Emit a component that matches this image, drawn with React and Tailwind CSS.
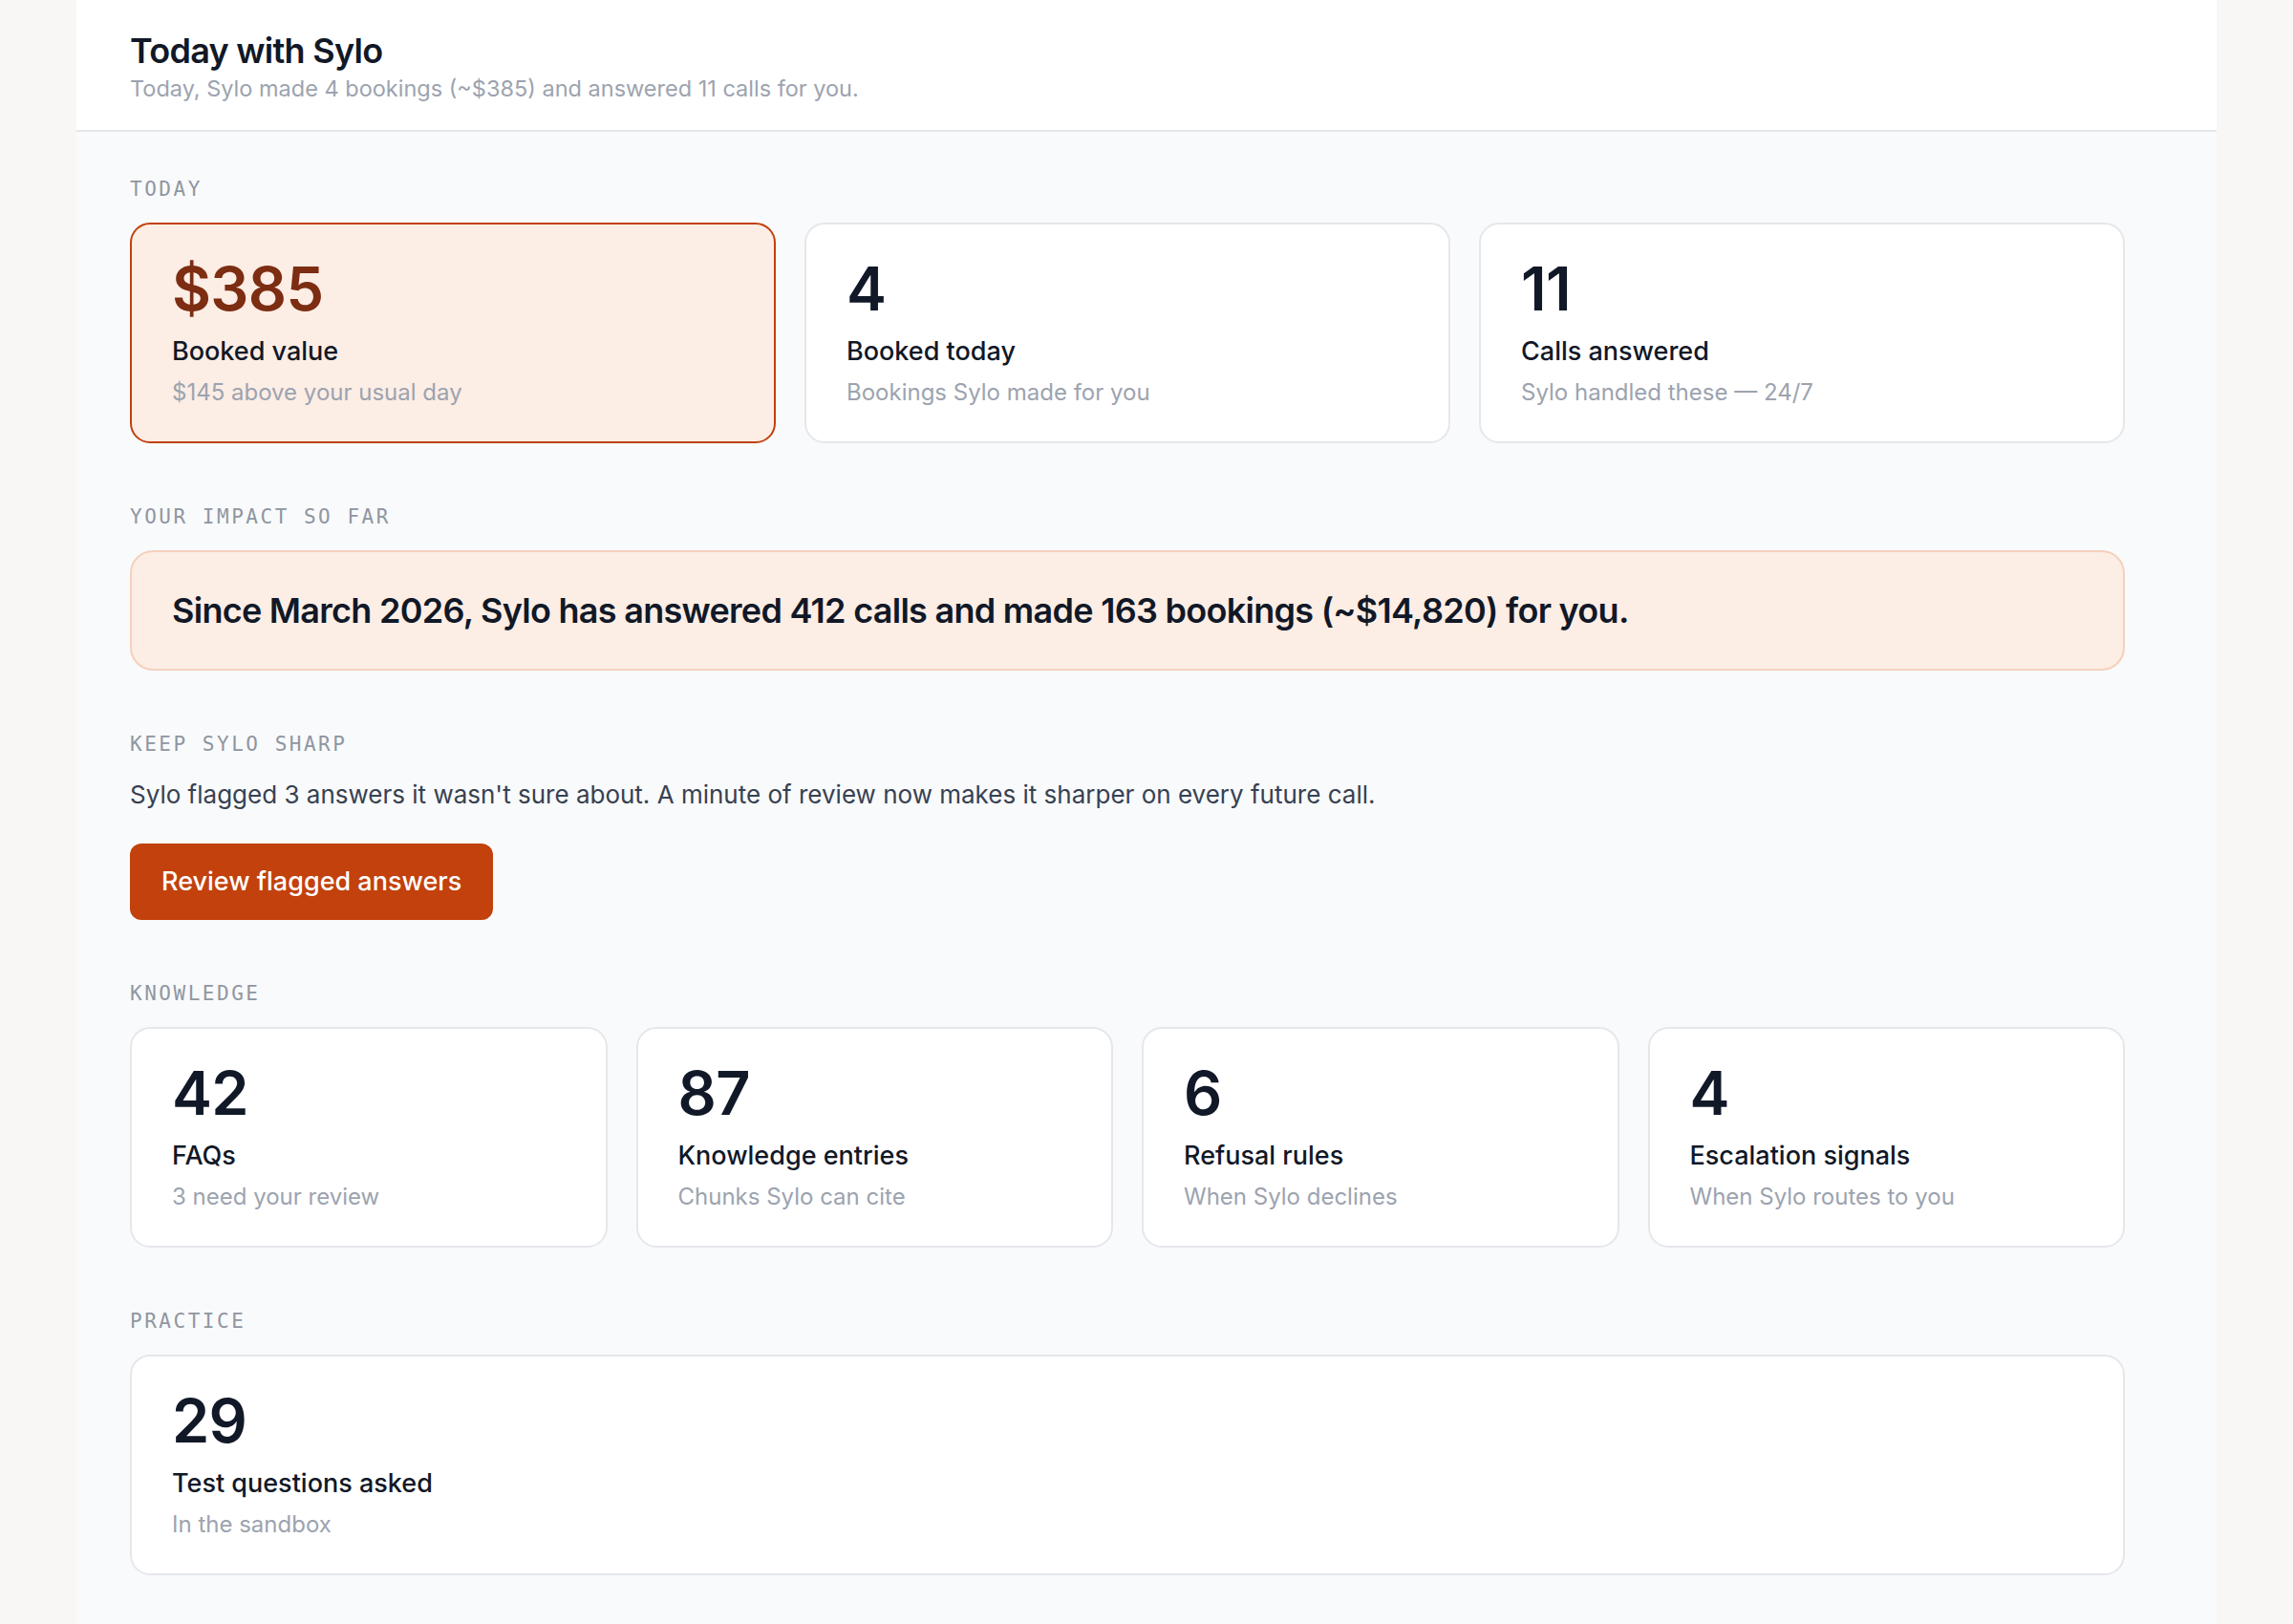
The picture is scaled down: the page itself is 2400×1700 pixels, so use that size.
import React from "react";

const today = [
  { value: "$385", title: "Booked value", sub: "$145 above your usual day", highlight: true },
  { value: "4", title: "Booked today", sub: "Bookings Sylo made for you" },
  { value: "11", title: "Calls answered", sub: "Sylo handled these — 24/7" },
];

const knowledge = [
  { value: "42", title: "FAQs", sub: "3 need your review" },
  { value: "87", title: "Knowledge entries", sub: "Chunks Sylo can cite" },
  { value: "6", title: "Refusal rules", sub: "When Sylo declines" },
  { value: "4", title: "Escalation signals", sub: "When Sylo routes to you" },
];

const Label = ({ children }) => (
  <div className="font-['DejaVu_Sans_Mono',monospace] text-[21px] leading-[30px] tracking-[0.12em] text-[#8f96a1] uppercase mb-[20px]">
    {children}
  </div>
);

const StatCard = ({ value, title, sub, highlight }) => (
  <div
    className={
      highlight
        ? "rounded-[21px] border-2 border-[#c2410c] bg-[#fcede5] px-[42px] pt-[36px] pb-[34px]"
        : "rounded-[21px] border-2 border-[#e5e7eb] bg-white px-[42px] pt-[36px] pb-[34px]"
    }
  >
    <div
      className={
        highlight
          ? "text-[63px] leading-none font-semibold tracking-[-0.01em] text-[#7c2d12]"
          : "text-[63px] leading-none font-semibold tracking-[-0.01em] text-[#111827]"
      }
    >
      {value}
    </div>
    <div className="mt-[16px] text-[27px] leading-[36px] font-medium text-[#111827]">{title}</div>
    <div className="mt-[8px] text-[24px] leading-[34px] text-[#9ca3af]">{sub}</div>
  </div>
);

export default function App() {
  return (
    <div className="min-h-screen bg-[#f8f7f5] font-['Inter',sans-serif]">
      <div className="mx-[80px] min-h-screen bg-[#f9fafb]">
        <header className="bg-white border-b-2 border-[#e5e7eb] pl-[56px] pt-[31px] pb-[26px]">
          <h1 className="text-[36px] leading-[45px] font-semibold tracking-[-0.02em] text-[#111827]">
            Today with Sylo
          </h1>
          <p className="text-[23.5px] leading-[34px] text-[#9ca3af]">
            Today, Sylo made 4 bookings (~$385) and answered 11 calls for you.
          </p>
        </header>

        <main className="pl-[56px] pr-[96px] pt-[45px] pb-[60px] flex flex-col gap-[62px]">
          <section>
            <Label>Today</Label>
            <div className="grid grid-cols-3 gap-[30px]">
              {today.map((s) => (
                <StatCard key={s.title} {...s} />
              ))}
            </div>
          </section>

          <section>
            <Label>Your impact so far</Label>
            <div className="rounded-[24px] border-2 border-[#f5d0bd] bg-[#fcede5] px-[42px] py-[37px]">
              <p className="text-[36px] leading-[48px] font-semibold tracking-[-0.02em] text-[#111827]">
                Since March 2026, Sylo has answered 412 calls and made 163 bookings (~$14,820) for you.
              </p>
            </div>
          </section>

          <section>
            <Label>Keep Sylo sharp</Label>
            <p className="text-[26px] leading-[36px] text-[#374151]">
              Sylo flagged 3 answers it wasn't sure about. A minute of review now makes it sharper on every future call.
            </p>
            <button className="mt-[33px] h-[80px] px-[33px] rounded-[12px] bg-[#c2410c] text-white text-[27px] font-medium">
              Review flagged answers
            </button>
          </section>

          <section>
            <Label>Knowledge</Label>
            <div className="grid grid-cols-4 gap-[30px]">
              {knowledge.map((s) => (
                <StatCard key={s.title} {...s} />
              ))}
            </div>
          </section>

          <section>
            <Label>Practice</Label>
            <StatCard value="29" title="Test questions asked" sub="In the sandbox" />
          </section>
        </main>
      </div>
    </div>
  );
}
